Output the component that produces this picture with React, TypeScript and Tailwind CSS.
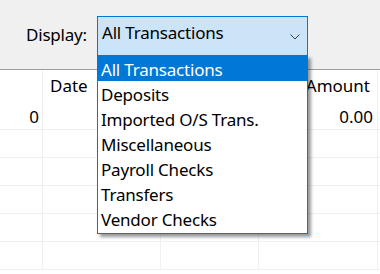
const options = [
  "All Transactions",
  "Deposits",
  "Imported O/S Trans.",
  "Miscellaneous",
  "Payroll Checks",
  "Transfers",
  "Vendor Checks",
];

const cell = "border-r border-[#f0f0f0]";

function EmptyRow() {
  return (
    <div className="grid h-[28px] grid-cols-[43px_118px_98px_119px_1fr] border-b border-[#f0f0f0]">
      <div className={cell} />
      <div className={cell} />
      <div className={cell} />
      <div className={cell} />
      <div />
    </div>
  );
}

export default function App() {
  return (
    <div className="relative h-[274px] w-[380px] overflow-hidden bg-white font-['Noto_Sans',sans-serif] text-[17px] leading-[23px] text-black">
      {/* toolbar */}
      <div className="flex h-[70px] items-start border-b border-[#a0a0a0] bg-[#f0f0f0] pl-[26px] pt-4">
        <span className="mt-[7px] w-[71px] tracking-[-0.2px]">Display:</span>
        <div className="flex h-[40px] w-[211px] items-start border border-[#0078d7] bg-[#cce4f7] pl-[4px] pr-[7px] pt-[4px]">
          <span className="tracking-[-0.2px]">All Transactions</span>
          <svg viewBox="0 0 10 6" className="ml-auto mt-[13px] h-[6px] w-[10px] fill-none stroke-[#404040]" strokeWidth="1">
            <path d="M0.5 0.5 5 5 9.5 0.5" />
          </svg>
        </div>
      </div>

      {/* register grid */}
      <div>
        <div className="grid h-[31px] grid-cols-[43px_118px_98px_119px_1fr]">
          <div className={cell} />
          <div className={`${cell} pl-[7px] pt-[4px]`}>Date</div>
          <div className={cell} />
          <div className={`${cell} pr-[7px] pt-[4px] text-right`}>Amount</div>
          <div />
        </div>
        <div className="grid h-[29px] grid-cols-[43px_118px_98px_119px_1fr] border-b border-[#f0f0f0]">
          <div className={`${cell} pr-[3px] pt-[4px] text-right`}>0</div>
          <div className={cell} />
          <div className={cell} />
          <div className={`${cell} pr-[4px] pt-[4px] text-right`}>0.00</div>
          <div />
        </div>
        <EmptyRow />
        <EmptyRow />
        <EmptyRow />
        <EmptyRow />
        <EmptyRow />
      </div>

      {/* open dropdown list */}
      <ul className="absolute left-[97px] top-[55px] h-[179px] w-[211px] border border-[#0078d7] bg-white tracking-[-0.2px] shadow-[3px_3px_3px_rgba(0,0,0,0.4)]">
        {options.map((o, i) => (
          <li
            key={o}
            className={`h-[25px] pl-[3px] pt-[3px] leading-[22px] ${i === 0 ? "bg-[#0078d7] text-white" : ""}`}
          >
            {o}
          </li>
        ))}
      </ul>
    </div>
  );
}
